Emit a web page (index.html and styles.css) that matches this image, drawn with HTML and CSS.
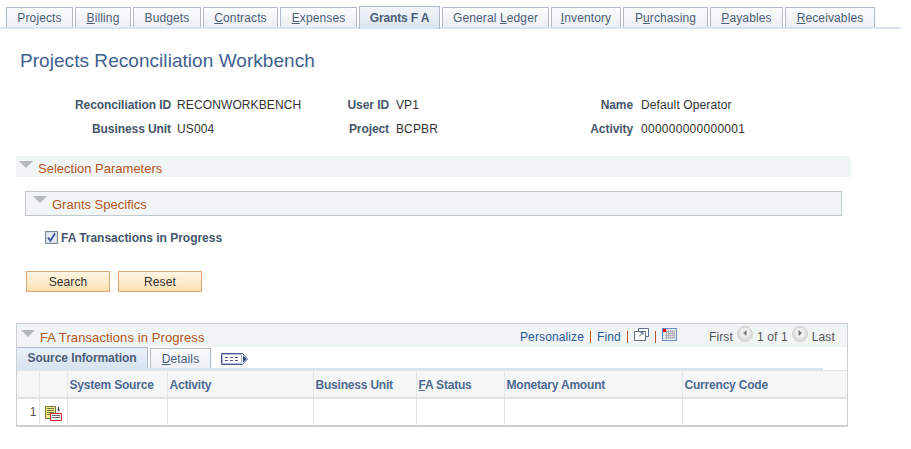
FILE: index.html
```html
<!DOCTYPE html>
<html lang="en">
<head>
<meta charset="utf-8">
<title>Projects Reconciliation Workbench</title>
<link rel="stylesheet" href="styles.css">
</head>
<body>
<nav class="tabs">
  <a class="tab w1">Projects</a>
  <a class="tab w2"><u>B</u>illing</a>
  <a class="tab w3">Budgets</a>
  <a class="tab w4"><u>C</u>ontracts</a>
  <a class="tab w5"><u>E</u>xpenses</a>
  <a class="tab active w6">Grants F A</a>
  <a class="tab w7">General <u>L</u>edger</a>
  <a class="tab w8"><u>I</u>nventory</a>
  <a class="tab w9">P<u>u</u>rchasing</a>
  <a class="tab w10"><u>P</u>ayables</a>
  <a class="tab w11"><u>R</u>eceivables</a>
</nav>

<h1 class="title">Projects Reconciliation Workbench</h1>

<dl class="info">
  <dt>Reconciliation ID</dt><dd class="v1">RECONWORKBENCH</dd>
  <dt>User ID</dt><dd class="v2">VP1</dd>
  <dt>Name</dt><dd class="v3">Default Operator</dd>
  <dt>Business Unit</dt><dd class="v1">US004</dd>
  <dt>Project</dt><dd class="v2">BCPBR</dd>
  <dt>Activity</dt><dd class="v3 digits">000000000000001</dd>
</dl>

<section class="bar sel-bar"><i class="tri"></i><span class="bar-title">Selection Parameters</span></section>
<section class="bar grants-bar"><i class="tri"></i><span class="bar-title">Grants Specifics</span></section>

<label class="check-row">
  <svg class="check" width="13" height="13" viewBox="0 0 13 13"><rect x=".5" y=".5" width="12" height="12" fill="#d5dae0" stroke="#7f8a97"/><rect x="2" y="2" width="9" height="9" fill="#e6e9ee"/><path d="M3 6.500l2.400 3.200L10 2.600" fill="none" stroke="#2f4f9f" stroke-width="1.800"/></svg>
  <b>FA Transactions in Progress</b>
</label>

<div class="buttons">
  <button class="btn">Search</button>
  <button class="btn">Reset</button>
</div>

<section class="grid">
  <header class="grid-head">
    <i class="tri"></i><span class="bar-title">FA Transactions in Progress</span>
    <div class="tools">
      <a>Personalize</a><s></s><a>Find</a><s></s>
      <svg class="ico" width="15" height="13" viewBox="0 0 15 13"><path d="M4.500 3.500V.5h10v8h-3M.5 3.500h11v9H.5z" fill="#fff" stroke="#5d6f8a"/><path d="M5 8.500l4-4M6.500 4.500H9V7" fill="none" stroke="#5d6f8a"/></svg>
      <s></s>
      <svg class="ico" width="15" height="13" viewBox="0 0 15 13"><rect x=".5" y=".5" width="14" height="12" fill="#e6e8ee" stroke="#6e8fc4"/><path d="M3 3.500h10M3 5.500h10M3 7.500h10M3 9.500h10M4.500 2v9M6.500 2v9M8.500 2v9M10.500 2v9M12.500 2v9" stroke="#a9aab0" stroke-width=".8"/><rect x="1" y="1" width="3" height="3" fill="#e8000f"/></svg>
    </div>
    <div class="pager">
      <span>First</span>
      <svg width="16" height="16" viewBox="0 0 16 16"><circle cx="8" cy="8" r="7.500" fill="#dcdcdc" stroke="#d0d0d0"/><circle cx="8" cy="7" r="5" fill="#efefef"/><path d="M9.500 4v6L6 7z" fill="#777"/></svg>
      <span>1 of 1</span>
      <svg width="16" height="16" viewBox="0 0 16 16"><circle cx="8" cy="8" r="7.500" fill="#dcdcdc" stroke="#d0d0d0"/><circle cx="8" cy="7" r="5" fill="#efefef"/><path d="M6.500 4v6L10 7z" fill="#777"/></svg>
      <span>Last</span>
    </div>
  </header>
  <div class="subtabs">
    <a class="sub active">Source Information</a>
    <a class="sub"><u>D</u>etails</a>
    <svg class="show-all" width="28" height="14" viewBox="0 0 28 14"><path d="M.5 1.500h21l5 5.500-5 5.500H.5z" fill="#fff" stroke="#4a5a9a"/><path d="M1.500 2.500h19v9h-19z" fill="none" stroke="#4a5a9a" stroke-opacity=".45"/><path d="M4 5.500h3M9 5.500h3M14 5.500h3M4 8.500h3M9 8.500h3M14 8.500h3" stroke="#4a5a9a"/><path d="M22 3.500v7l3.500-3.500z" fill="#30407f"/></svg>
  </div>
  <table>
    <thead>
      <tr><th class="c1"></th><th class="c2"></th><th class="c3">System Source</th><th class="c4">Activity</th><th class="c5">Business Unit</th><th class="c6"><u>F</u>A Status</th><th class="c7">Monetary Amount</th><th class="c8">Currency Code</th></tr>
    </thead>
    <tbody>
      <tr>
        <td class="num">1</td>
        <td class="ic"><svg width="17" height="15" viewBox="0 0 17 15"><path d="M.5.5h10v12H.5z" fill="#f7ec80" stroke="#77744a"/><path d="M2 2.500h7M2 4.500h7M2 6.500h7M2 8.500h3" stroke="#77744a"/><path d="M13.500 1v4" stroke="#333"/><path d="M12 3.500h3l-1.500 2z" fill="#333"/><path d="M5.500 7.500h11v7h-11z" fill="#fff" stroke="#d3271e"/><path d="M7 9.500h8M7 11.500h8" stroke="#666"/></svg></td>
        <td></td><td></td><td></td><td></td><td></td><td></td>
      </tr>
    </tbody>
  </table>
</section>
</body>
</html>
```

FILE: styles.css
```css
* { box-sizing: border-box; }
html, body { margin: 0; }
body {
  width: 911px;
  height: 449px;
  overflow: hidden;
  background: #fff;
  font: 12px "Liberation Sans", Arial, sans-serif;
  letter-spacing: .12px;
  color: #333;
  padding-top: 6px;
}
.tabs {
  display: flex;
  gap: 2px;
  align-items: flex-end;
  width: 901px;
  height: 23px;
  padding-left: 6px;
  border-bottom: 2px solid #d9e4f1;
}
.tab {
  height: 20px;
  border: 1px solid #aeb8c8;
  border-bottom: 0;
  background: linear-gradient(#fafbfc, #eceff3);
  color: #4d5e77;
  text-align: center;
  line-height: 20px;
}
.tab.active {
  height: 23px;
  margin-bottom: -2px;
  background: linear-gradient(#f1f5f9, #d9e4f1);
  font-weight: bold;
  line-height: 23px;
  letter-spacing: -.15px;
}
.w1 { width: 67px; } .w2 { width: 56px; } .w3 { width: 68px; } .w4 { width: 75px; }
.w5 { width: 77px; } .w6 { width: 81px; } .w7 { width: 107px; } .w8 { width: 70px; }
.w9 { width: 85px; } .w10 { width: 73px; } .w11 { width: 90px; }

.title {
  margin: 21px 0 0 20px;
  height: 22px;
  font-size: 19px;
  line-height: 22px;
  font-weight: normal;
  letter-spacing: .05px;
  color: #3f618f;
}
.info {
  display: grid;
  grid-template-columns: 171px 149px 69px 171px 73px 1fr;
  grid-auto-rows: 24px;
  margin: 21px 0 0;
  line-height: 24px;
}
.info dt { font-weight: bold; text-align: right; color: #46566b; letter-spacing: -.08px; }
.info dd { margin: 0; color: #333; }
.v1 { padding-left: 6px; }
.v2 { padding-left: 7px; }
.v3 { padding-left: 8px; }
.info .digits { letter-spacing: .27px; }

.bar { display: flex; align-items: center; }
.tri {
  display: block;
  flex: none;
  width: 0;
  height: 0;
  border-left: 7px solid transparent;
  border-right: 7px solid transparent;
  border-top: 7px solid #b4b9bd;
}
.bar-title { font-size: 13px; color: #b4561d; letter-spacing: 0; }
.sel-bar {
  width: 835px;
  height: 21px;
  margin: 15px 0 0 16px;
  padding-left: 3px;
  background: #f2f5f5;
}
.sel-bar .tri { margin: -4px 5px 0 0; }
.sel-bar .bar-title { padding-top: 4px; }
.grants-bar {
  width: 817px;
  height: 25px;
  margin: 14px 0 0 25px;
  padding-left: 7px;
  background: #f2f5f5;
  border: 1px solid #c2c9cc;
}
.grants-bar .tri { margin: -8px 5px 0 0; }
.grants-bar .bar-title { padding-top: 2px; }
.check-row {
  display: flex;
  align-items: center;
  gap: 3px;
  margin: 14px 0 0 45px;
  height: 15px;
  color: #46566b;
  letter-spacing: -.02px;
}
.buttons { display: flex; gap: 8px; margin: 26px 0 0 26px; }
.btn {
  width: 84px;
  height: 21px;
  padding: 0;
  border: 1px solid #dca878;
  background: linear-gradient(#fdf6e6, #fbdfb0);
  font: 12px "Liberation Sans", Arial, sans-serif;
  color: #333;
  letter-spacing: .12px;
}
.grid {
  width: 832px;
  height: 104px;
  margin: 31px 0 0 16px;
  border: 1px solid #c9cfd2;
  border-bottom-width: 2px;
}
.grid-head {
  display: flex;
  align-items: center;
  height: 23px;
  padding-left: 4px;
  background: #f0f4f4;
}
.grid-head .tri { margin: -4px 5px 0 0; }
.grid-head .bar-title { width: 484px; padding-top: 4px; letter-spacing: .1px; }
.tools { display: flex; align-items: center; gap: 6px; width: 181px; margin-left: -4px; padding-top: 2px; color: #2a5a9a; }
.tools s { width: 1px; height: 12px; background: #b4561d; }
.ico { margin-top: -5px; }
.pager { display: flex; align-items: center; gap: 4px; color: #555; margin-left: 8px; padding-top: 2px; }
.pager svg { margin-top: -5px; }
.subtabs {
  display: flex;
  align-items: flex-end;
  gap: 2px;
  height: 23px;
  position: relative;
}
.sub {
  height: 21px;
  width: 61px;
  margin-bottom: 1px;
  border: 1px solid #aeb8c8;
  border-bottom: 0;
  background: linear-gradient(#fafbfc, #eceff3);
  text-align: center;
  line-height: 20px;
  color: #4d5e77;
}
.sub.active {
  width: 131px;
  height: 22px;
  border-width: 1px 1px 0 0;
  background: linear-gradient(#eaf1f8, #d6e3f1);
  font-weight: bold;
  line-height: 21px;
  letter-spacing: -.06px;
}
.show-all { margin: 0 0 4px 8px; }
.subtabs::after {
  content: "";
  position: absolute;
  left: 0;
  bottom: 0;
  width: 806px;
  height: 2px;
  background: #d9e4f1;
}
table {
  width: 830px;
  border-collapse: collapse;
  table-layout: fixed;
}
th {
  height: 27px;
  padding: 2px 0 0 2px;
  background: #f5f6f6;
  border-right: 1px solid #e3e6e7;
  border-top: 1px solid #e3e6e7;
  border-bottom: 2px solid #dfe2e3;
  text-align: left;
  font-weight: bold;
  color: #4d6a92;
  letter-spacing: -.2px;
}
td {
  height: 28px;
  padding: 0;
  border-right: 1px solid #e3e6e7;
}
th:last-child, td:last-child { border-right: 0; }
.c1 { width: 22px; } .c2 { width: 28px; } .c3 { width: 100px; } .c4 { width: 146px; }
.c5 { width: 103px; } .c6 { width: 88px; } .c7 { width: 178px; }
.num { text-align: right; padding-right: 2px; color: #555; }
.ic { padding: 2px 0 0 5px; }
.ic svg { display: block; }
```
